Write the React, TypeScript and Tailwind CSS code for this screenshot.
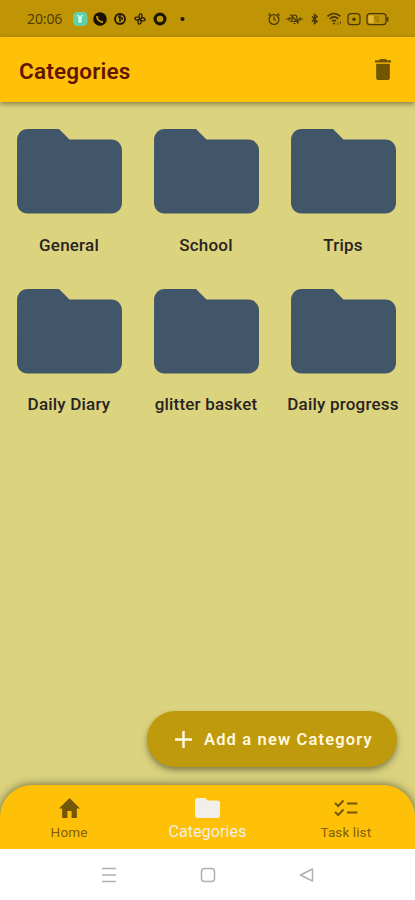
import React from "react";

const categories = ["General", "School", "Trips", "Daily Diary", "glitter basket", "Daily progress"];

function Folder({ className }: { className: string }) {
  return (
    <svg viewBox="2 4 20 16" preserveAspectRatio="none" fill="currentColor" className={className}>
      <path d="M10 4H4c-1.1 0-1.99.9-1.99 2L2 18c0 1.1.9 2 2 2h16c1.1 0 2-.9 2-2V8c0-1.1-.9-2-2-2h-8l-2-2z" />
    </svg>
  );
}

function StatusBar() {
  return (
    <div className="flex h-[37px] shrink-0 items-center bg-[#bf9405] pl-[27px] pt-[1px] text-[#2a2000]">
      <span className="w-[45px] whitespace-nowrap font-['Open_Sans',sans-serif] text-[14px] leading-none tracking-[-0.1px] text-[#4a3900]">20:06</span>
      <svg width="128" height="20" viewBox="0 0 128 20" fill="none" stroke="#1d1600" strokeWidth="1.5">
        <rect x="1" y="3" width="14.5" height="14" rx="4.5" fill="#63ceaa" stroke="none" />
        <path d="M5.5 6l2.5 3 2.5-3M6 9.5h4M6 12h4M8 8v6" stroke="#d9ffe9" strokeWidth="1.3" />
        <circle cx="28" cy="10" r="6.8" fill="#171100" stroke="none" />
        <path d="M25 7c0 3.5 2.5 6 6 6" stroke="#bf9405" strokeWidth="2" />
        <circle cx="48" cy="10" r="5" strokeWidth="1.8" />
        <path d="M46.3 8.5L48 7v6M50 8v3" />
        <path d="M68 10c-3-5 2-7 2-3 0 2-1 3-2 3zm0 0c5-3 7 2 3 2-2 0-3-1-3-2zm0 0c3 5-2 7-2 3 0-2 1-3 2-3zm0 0c-5 3-7-2-3-2 2 0 3 1 3 2z" strokeWidth="1.2" />
        <circle cx="88" cy="10" r="4.9" strokeWidth="3.2" />
        <circle cx="110.5" cy="10" r="2" fill="#1d1600" stroke="none" />
      </svg>
      <svg width="128" height="20" viewBox="0 0 128 20" fill="none" stroke="#493900" strokeWidth="1.2" className="ml-[64px]">
        <circle cx="10" cy="10.5" r="4.9" />
        <path d="M10 7.5v3l2 1M4.5 6.5l2-2M15.5 6.5l-2-2" />
        <path d="M22 10h3l2-1M39 10h-3l-2 1M25 8.3v3.4M36 8.3v3.4M27 12.5h7l-1-2V9c0-4-5-4-5 0v2zM29.5 14.5h2M26.5 5.5l8 9" />
        <path d="M48 7.5l5 5-2.5 2v-9l2.5 2-5 5" strokeWidth="1.5" />
        <path d="M63.5 7.3c4-3.7 9-3.7 13 0M65.8 9.8c2.6-2.3 5.8-2.3 8.4 0M68 12.2c1.4-1.2 2.6-1.2 4 0" strokeWidth="1.7" />
        <circle cx="70" cy="14.5" r="1.1" fill="#493900" stroke="none" />
        <path d="M74 13v3M76.5 12v3" strokeWidth=".7" />
        <rect x="84" y="4.7" width="12" height="11" rx="3" />
        <circle cx="90" cy="10.2" r="1.7" fill="#493900" stroke="none" />
        <rect x="103" y="4.7" width="19" height="11" rx="3" />
        <rect x="104.5" y="6.3" width="5" height="7.8" rx="1" fill="#e1b73e" stroke="none" />
        <path d="M123.5 8v4.5" strokeWidth="1.8" />
        <path d="M114.5 7.8h-3v2.2h3v2.3h-3" stroke="#967100" strokeWidth="1" />
      </svg>
    </div>
  );
}

export default function App() {
  return (
    <div className="flex h-[900px] w-[415px] flex-col overflow-hidden bg-[#dbd37e] font-[Roboto,sans-serif]">
      <StatusBar />
      <header className="z-10 flex h-[65px] shrink-0 items-center justify-between bg-[#ffc107] pl-[19px] pr-[24px] shadow-[0_2px_5px_rgba(0,0,0,0.4)]">
        <h1 className="mt-[3px] text-[22.5px] font-semibold leading-none tracking-[0.2px] text-[#621500]">Categories</h1>
        <svg viewBox="5 3 14 18" className="h-[21px] w-[16px]" preserveAspectRatio="none" fill="#735600">
          <path d="M6 19c0 1.1.9 2 2 2h8c1.1 0 2-.9 2-2V7H6v12zM19 4h-3.5l-1-1h-5l-1 1H5v2h14V4z" />
        </svg>
      </header>
      <main className="flex min-h-0 flex-1 flex-col pt-[26px]">
        <div className="grid grid-cols-[137px_137px_137px] gap-y-[54.5px] pl-px">
          {categories.map((name) => (
            <div key={name} className="flex h-[105px] flex-col items-center">
              <Folder className="mt-px h-[84.5px] w-[105px] shrink-0 overflow-visible text-[#42566a]" />
              <span className="mr-px mt-[21px] whitespace-nowrap text-[17px] font-medium leading-[20px] tracking-[0.2px] text-[#29231f]">{name}</span>
            </div>
          ))}
        </div>
        <button className="mb-[18px] mr-[18px] mt-auto flex h-[56px] w-[250px] items-center self-end rounded-full bg-[#bf9a0d] pl-[24px] text-[#fff8df] shadow-[0_3px_5px_rgba(0,0,0,0.3),0_5px_10px_rgba(0,0,0,0.12)]">
          <svg viewBox="0 0 24 24" className="h-[25px] w-[25px]" fill="currentColor">
            <path d="M20.2 13.2h-7v7h-2.4v-7h-7v-2.4h7v-7h2.4v7h7z" />
          </svg>
          <span className="ml-[8px] mt-[2px] whitespace-nowrap text-[16.5px] font-semibold tracking-[1.15px]">Add a new Category</span>
        </button>
      </main>
      <nav className="grid h-[64px] shrink-0 grid-cols-3 rounded-t-[32px] bg-[#ffc107] text-[#80600b] shadow-[0_0_10px_rgba(0,0,0,0.55)]">
        <div className="flex flex-col items-center">
          <svg viewBox="2 3 20 17" className="mt-[13px] h-[20px] w-[21px]" preserveAspectRatio="none" fill="#745609">
            <path d="M10 20v-6h4v6h5v-8h3L12 3 2 12h3v8z" />
          </svg>
          <span className="mt-[5px] text-[13.5px] leading-[18px] tracking-[0.2px]">Home</span>
        </div>
        <div className="flex flex-col items-center text-[#f2eee8]">
          <Folder className="mt-[13px] h-[20px] w-[25px]" />
          <span className="mt-[5px] text-[16px] leading-[18px] tracking-[0.1px]">Categories</span>
        </div>
        <div className="flex flex-col items-center">
          <svg viewBox="0 0 24 17" className="mt-[14px] h-[17px] w-[24px]" fill="none" stroke="#745609" strokeWidth="2">
            <path d="M1 4l3.2 3L9.5 1.5M1 13l3.2 3 5.3-5.5M13 4.5h10.5M13 13.5h10.5" />
          </svg>
          <span className="mt-[7px] text-[13.5px] leading-[18px] tracking-[0.1px]">Task list</span>
        </div>
      </nav>
      <div className="z-10 flex h-[51px] shrink-0 items-center bg-white pl-[101px]">
        <svg width="216" height="20" viewBox="0 0 216 20" fill="none" stroke="#b0b0b0" strokeWidth="1.5">
          <path d="M1 3.5h14M1 10h14M1 16.5h14" />
          <rect x="100.5" y="3.5" width="13" height="13" rx="3" />
          <path d="M199.5 10l12-6v12z" strokeLinejoin="round" />
        </svg>
      </div>
    </div>
  );
}
